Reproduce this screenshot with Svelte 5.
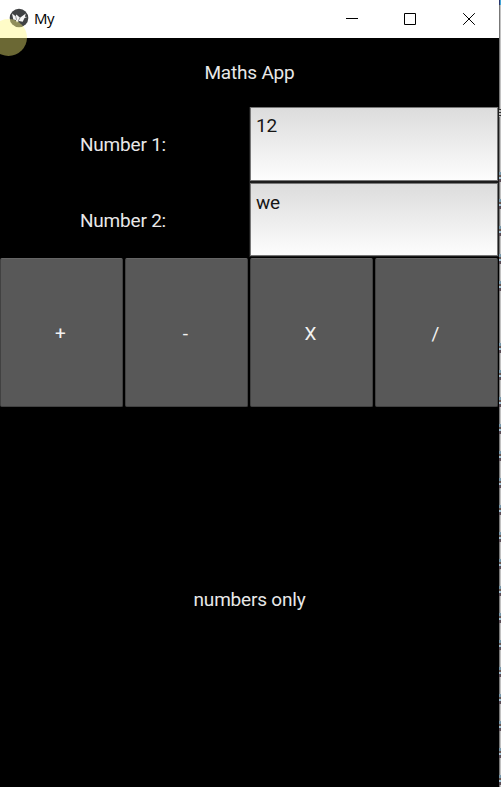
<script>
  const operators = ['+', '-', 'X', '/'];
  const marks = [178, 205, 232, 260, 287, 349, 376, 403, 430, 457, 484, 511, 538, 565, 592, 619, 646, 673, 700, 727, 754, 781];
  let first = $state('12');
  let second = $state('we');
</script>

<div class="desktop">
  <main class="window">
    <header>
      <svg class="logo" width="20" height="20" viewBox="0 0 20 20">
        <circle cx="10" cy="10" r="9.3" fill="#404244" />
        <path d="M3 5.4 6.6 8.2 7.4 6.6l3.6 3.2 5.8-4.3-.9 3.2 2.4.2-2.8 1.2-1.8 3.6-3.6-.6-2.3 1.5-1-2.7-2.5-.4z" fill="#f6f6f6" />
        <path d="m6.7 8.2.9 3.6M11 9.8l-2 3.6" fill="none" stroke="#66686a" stroke-width=".7" />
      </svg>
      <span class="name">My</span>
      <div class="controls">
        <svg width="14" height="14" viewBox="0 0 14 14"><path d="M1 6.5h12" /></svg>
        <svg width="14" height="14" viewBox="0 0 14 14"><path d="M1.5 1.5h11v11h-11z" /></svg>
        <svg width="14" height="14" viewBox="0 0 14 14"><path d="m1.2 1.2 11.6 11.6M12.8 1.2 1.2 12.8" /></svg>
      </div>
    </header>
    <h1>Maths App</h1>
    <div class="row">
      <label for="first">Number 1:</label>
      <div class="field"><input id="first" bind:value={first} /></div>
    </div>
    <div class="row second">
      <label for="second">Number 2:</label>
      <div class="field"><input id="second" bind:value={second} /></div>
    </div>
    <div class="buttons">
      {#each operators as op}
        <button>{op}</button>
      {/each}
    </div>
    <div class="result">numbers only</div>
  </main>
  <div class="behind">
    <i class="corner"></i>
    <i class="dash"></i>
    {#each marks as y}
      <i class="mark" style="top: {y - 6}px"></i>
    {/each}
  </div>
  <div class="pointer"></div>
</div>

<style>
  :global(body) { margin: 0; overflow: hidden; }
  .desktop {
    position: relative;
    display: flex;
    width: 501px;
    height: 787px;
    overflow: hidden;
    background: #000;
    font: 19px/22px Roboto, sans-serif;
    letter-spacing: -.2px;
    color: #e8e8e8;
  }
  .window {
    display: flex;
    flex-direction: column;
    width: 499px;
    flex: none;
  }
  header {
    display: flex;
    align-items: center;
    height: 38px;
    box-sizing: border-box;
    padding: 0 23px 0 9px;
    background: #fff;
    color: #000;
  }
  .logo { margin-top: -2px; }
  .name {
    margin: -2px 0 0 5px;
    font: 15px/20px "Open Sans", "Noto Sans", sans-serif;
    letter-spacing: -.5px;
  }
  .controls { display: flex; gap: 45px; margin-left: auto; }
  .controls svg { fill: none; stroke: #000; stroke-width: 1; }
  .controls svg:first-child { margin-right: -1px; }
  h1 {
    margin: 0;
    height: 69px;
    line-height: 70px;
    font-size: 19px;
    font-weight: 400;
    text-align: center;
  }
  .row { display: flex; height: 75px; }
  label {
    width: 249px;
    box-sizing: border-box;
    padding-right: 3px;
    line-height: 75px;
    text-align: center;
  }
  .second label { line-height: 77px; }
  .field {
    width: 250px;
    box-sizing: border-box;
    padding: 0 1px 1px;
    background: #1c1c1c;
  }
  .second .field { padding-top: 1px; }
  input {
    display: block;
    width: 248px;
    height: 74px;
    box-sizing: border-box;
    padding: 0 5px 38px;
    border: 1px solid #777;
    border-radius: 0;
    outline: none;
    background: linear-gradient(#dcdcdc, #fdfdfd);
    color: #161616;
    font: 19px/22px Roboto, sans-serif;
    letter-spacing: -.2px;
  }
  .second input { height: 73px; padding-bottom: 35px; }
  .buttons {
    display: flex;
    gap: 2px;
    height: 150px;
    box-sizing: border-box;
    padding: 1px 1px 0 0;
  }
  button {
    flex: 1 1 0;
    min-width: 0;
    padding: 2px 2px 0 0;
    border: 1px solid #414141;
    border-top-color: #656565;
    border-radius: 2px;
    background: #585858;
    color: #f2f2f2;
    font: 19px/22px Roboto, sans-serif;
  }
  .result {
    flex: 1;
    display: flex;
    align-items: center;
    justify-content: center;
    padding-top: 6px;
  }
  .behind {
    position: relative;
    width: 2px;
    background: linear-gradient(90deg, #777 1px, #c2c2c2 1px);
  }
  .corner { position: absolute; top: 0; left: 0; width: 2px; height: 5px; background: linear-gradient(90deg, #26356b 1px, #42a5d8 1px); }
  .dash { position: absolute; top: 109px; left: 0; width: 2px; height: 8px; background: repeating-linear-gradient(#333 0 1px, #bbb 1px 3px); }
  .mark {
    position: absolute;
    left: 0;
    width: 2px;
    height: 10px;
    background: linear-gradient(#7798aa 0 3px, #675550 3px 5px, #a4c4d4 5px 7px, #5b4c55 7px);
  }
  .pointer {
    position: absolute;
    left: -10px;
    top: 19px;
    width: 37px;
    height: 37px;
    border-radius: 50%;
    background: rgba(255, 249, 125, .42);
  }
</style>
